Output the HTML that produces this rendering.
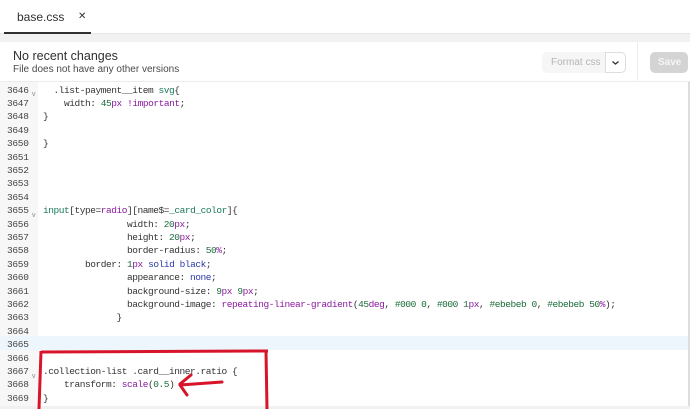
<!DOCTYPE html>
<html><head><meta charset="utf-8"><style>
*{margin:0;padding:0;box-sizing:border-box}
body{width:690px;height:409px;overflow:hidden;background:#f1f1f1;font-family:"Liberation Sans",sans-serif;position:relative}
.tabbar{position:absolute;left:0;top:0;width:690px;height:34px;background:#fff;border-bottom:1px solid #e6e6e6}
.tab{position:absolute;left:17px;top:10px;font-size:12px;color:#303030}
.x{position:absolute;left:78px;top:11px;font-size:10px;color:#303030}
.ul{position:absolute;left:4px;top:32px;width:87px;height:2px;background:#303030}
.panel{position:absolute;left:0;top:42px;width:690px;height:40px;background:#fff;border-bottom:1px solid #ececec}
.t1{position:absolute;left:13px;top:7px;font-size:12.5px;color:#303030}
.t2{position:absolute;left:13px;top:22px;font-size:10px;color:#4a4a4a}
.fmt{position:absolute;left:542px;top:10px;width:65px;height:21px;background:#f6f6f6;border-radius:5px 0 0 5px;font-size:10px;color:#b5b5b5;padding:5px 0 0 9px}
.dd{position:absolute;left:605px;top:10px;width:21px;height:21px;border:1px solid #ddd;border-radius:0 5px 5px 0;background:#fff}
.sep{position:absolute;left:637px;top:0;width:1px;height:40px;background:#eee}
.save{position:absolute;left:650px;top:10px;width:38px;height:21px;background:#d4d4d4;border-radius:5px;font-size:10px;color:#f5f5f5;font-weight:bold;padding:5px 0 0 8px}
.ed{position:absolute;left:0;top:82px;width:690px;height:324px;background:#fff;border-right:2px solid #ddd}
.gut{position:absolute;left:0;top:0;width:38px;height:324px;background:#f7f7f7}
.hl{position:absolute;left:0;top:254px;width:688px;height:14px;background:#eef6fd}
.lines{position:absolute;left:0;top:1.5px;font-family:"Liberation Mono",monospace;font-size:9.5px;letter-spacing:-0.45px;line-height:13.4px;white-space:pre}
.ln{position:absolute;left:7px;width:33px;color:#444;letter-spacing:-0.3px}
.cd{position:absolute;left:43px;color:#333}
.fold{position:absolute;left:32px;color:#888;font-family:"Liberation Sans",sans-serif;font-size:7px;line-height:8px}
.s{color:#1a7a57}.p{color:#8a1a9e}.n{color:#1a6b3a}.k{color:#2d3aa8}
</style></head><body>
<div class="tabbar"><div class="tab">base.css</div><div class="x">✕</div><div class="ul"></div></div>
<div class="panel"><div class="t1">No recent changes</div><div class="t2">File does not have any other versions</div>
<div class="fmt">Format css</div><div class="dd"><svg width="19" height="19"><path d="M6.5 8.5l3 2.5 3-2.5" stroke="#333" stroke-width="1.3" fill="none"/></svg></div><div class="sep"></div><div class="save">Save</div></div>
<div class="ed">
<div class="gut"></div><div class="hl"></div>
<div class="fold" style="top:9px">v</div>
<div class="fold" style="top:130px">v</div>
<div class="fold" style="top:291px">v</div>
<div class="lines ln">3646
3647
3648
3649
3650
3651
3652
3653
3654
3655
3656
3657
3658
3659
3660
3661
3662
3663
3664
3665
3666
3667
3668
3669</div>
<div class="lines cd">  .list-payment__item <span class="s">svg</span>{
    width: <span class="n">45</span><span class="p">px</span> <span class="p">!important</span>;
}

}




<span class="s">input</span>[type=<span class="p">radio</span>][name$=<span class="s">_card_color</span>]{
                width: <span class="n">20</span><span class="p">px</span>;
                height: <span class="n">20</span><span class="p">px</span>;
                border-radius: <span class="n">50</span><span class="p">%</span>;
        border: <span class="n">1</span><span class="p">px</span> <span class="k">solid black</span>;
                appearance: <span class="k">none</span>;
                background-size: <span class="n">9</span><span class="p">px</span> <span class="n">9</span><span class="p">px</span>;
                background-image: <span class="p">repeating-linear-gradient</span>(<span class="n">45</span><span class="p">deg</span>, <span class="n">#000 0</span>, <span class="n">#000 1</span><span class="p">px</span>, <span class="n">#ebebeb 0</span>, <span class="n">#ebebeb 50</span><span class="p">%</span>);
              }



.collection-list .card__inner.ratio {
    transform: <span class="p">scale</span>(<span class="n">0.5</span>)
}</div>
</div>
<svg style="position:absolute;left:0;top:0" width="690" height="409">
<path d="M41 352L268 351M41 351L39 409M266 351L267 409" stroke="#d8142a" stroke-width="3" fill="none"/>
<path d="M222 382L180 385M180 384L191 375M180 385L187 395" stroke="#d8142a" stroke-width="3" fill="none" stroke-linecap="round"/>
</svg>
</body></html>
